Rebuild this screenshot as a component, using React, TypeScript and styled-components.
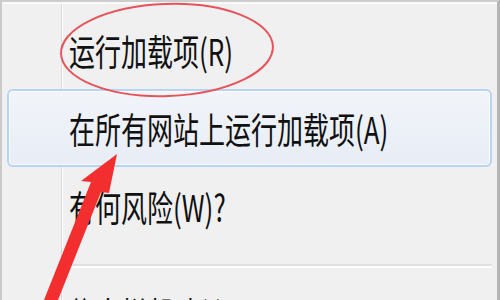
import styled, { createGlobalStyle } from 'styled-components';

const GlobalStyle = createGlobalStyle`
  html, body {
    margin: 0;
    padding: 0;
    background: #f0f0f0;
  }
`;

const Page = styled.div`
  position: relative;
  width: 500px;
  height: 300px;
  overflow: hidden;
`;

const Menu = styled.div`
  display: flex;
  flex-direction: column;
  width: 500px;
  height: 300px;
  box-sizing: border-box;
  padding: 9px 5px 0 5px;
  border-top: 2px solid #cdcdcd;
  border-left: 2px solid #cacaca;
  border-right: 3px solid #b5b5b5;
  background-color: #f0f0f0;
  background-image: linear-gradient(
    to right,
    transparent 59px,
    #dadada 59px,
    #dadada 60px,
    #ffffff 60px,
    #ffffff 61px,
    transparent 61px
  );
  box-shadow: inset 0 2px 0 #fafafa;
  font-family: 'Noto Sans CJK SC', 'Microsoft YaHei', sans-serif;
  color: #111;
`;

const Item = styled.div<{ $active?: boolean }>`
  flex-shrink: 0;
  display: flex;
  align-items: center;
  height: 78px;
  box-sizing: border-box;
  padding-left: 60px;
  border: 2px solid ${p => (p.$active ? '#b7d4f5' : 'transparent')};
  border-radius: 6px;
  background: ${p =>
    p.$active ? 'linear-gradient(#f1f4f9, #e8edf6)' : 'transparent'};
  box-shadow: ${p => (p.$active ? 'inset 0 0 0 1px rgba(255,255,255,0.7)' : 'none')};
`;

const Label = styled.span`
  display: inline-block;
  font-size: 26px;
  line-height: 1;
  transform: scaleY(1.42);
  transform-origin: left center;
  white-space: nowrap;
`;

const Separator = styled.div`
  flex-shrink: 0;
  height: 2px;
  margin: 19px 0 0 61px;
  border-bottom: 2px solid #ffffff;
  background: #e0e0e0;
`;

const LastItem = styled(Item)`
  align-items: flex-start;
  padding-top: 30px;
`;

const Annotation = styled.svg`
  position: absolute;
  left: 0;
  top: 0;
  pointer-events: none;
`;

export default function App() {
  return (
    <>
      <GlobalStyle />
      <Page>
        <Menu>
          <Item>
            <Label>运行加载项(R)</Label>
          </Item>
          <Item $active>
            <Label>在所有网站上运行加载项(A)</Label>
          </Item>
          <Item>
            <Label>有何风险(W)?</Label>
          </Item>
          <Separator />
          <LastItem>
            <Label>信息栏帮助(I)</Label>
          </LastItem>
        </Menu>
        <Annotation width="500" height="300" viewBox="0 0 500 300">
          <ellipse
            cx="167"
            cy="50"
            rx="106"
            ry="46"
            fill="none"
            stroke="#e8535b"
            strokeWidth="2"
            transform="rotate(-2 167 50)"
          />
          <polygon
            points="117,154 81,181 91,182 44,300 58,300 101,192 109,193"
            fill="#f32e2e"
          />
        </Annotation>
      </Page>
    </>
  );
}
